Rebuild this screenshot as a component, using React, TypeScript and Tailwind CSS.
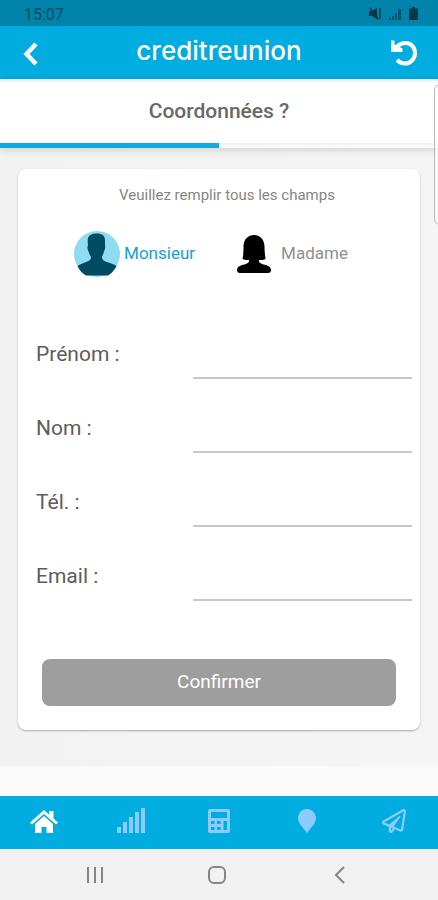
import { useState } from 'react';
import type { ReactNode } from 'react';
import { FaRegPaperPlane } from 'react-icons/fa';

type Gender = 'monsieur' | 'madame';

const fields = [
  { id: 'prenom', label: 'Prénom :', type: 'text' },
  { id: 'nom', label: 'Nom :', type: 'text' },
  { id: 'tel', label: 'Tél. :', type: 'tel' },
  { id: 'email', label: 'Email :', type: 'email' },
];

function StatusBar() {
  return (
    <div className="flex h-[26px] items-center justify-between bg-[#0083ab] pr-5 pl-6 text-[#0a4a60]">
      <span className="pt-1 text-base leading-5">15:07</span>
      <div className="flex items-center gap-2">
        <svg width="12" height="13" viewBox="0 0 12 13" fill="none" stroke="#07394b">
          <path d="M0 4h3l5-3v11l-5-3H0z" fill="#07394b" stroke="none" />
          <path d="M0.500 0.500l9 12" strokeWidth="1.500" />
          <path d="M11 1v11" strokeWidth="1.400" />
        </svg>
        <svg width="12" height="13" viewBox="0 0 12 13" fill="#0a536d">
          <path d="M0 11h2v2H0zM3 9h2v4H3zM6 6h2v7H6zM9 2h3v11H9z" />
        </svg>
        <svg width="9" height="13" viewBox="0 0 9 13" fill="#07394b">
          <path d="M3 0h3v1.500h3V13H0V1.500H3z" />
        </svg>
      </div>
    </div>
  );
}

function Header() {
  return (
    <header className="grid h-[53px] grid-cols-[1fr_auto_1fr] items-center bg-[#00ace0] px-5 text-white">
      <button type="button" aria-label="Retour" className="justify-self-start">
        <svg width="20" height="26" viewBox="0 0 20 26" fill="none" stroke="currentColor" strokeWidth="4.500">
          <path d="M16 4L6.500 14L16 24" />
        </svg>
      </button>
      <span className="pb-1 font-['Inter'] text-[26px] leading-8 font-medium">creditreunion</span>
      <button type="button" aria-label="Recommencer" className="justify-self-end">
        <svg width="28" height="28" viewBox="0 0 28 28" fill="none" stroke="currentColor">
          <path d="M6 8.500C9 5.500 12 4 15.500 4C20.500 4 25 8 25 14C25 20 20.500 24.500 15 24.500C11.500 24.500 9 23 7 21" strokeWidth="4" />
          <path d="M1 1.500H4.500V5.500L12.500 9.500V13H1z" fill="currentColor" stroke="none" />
        </svg>
      </button>
    </header>
  );
}

function MonsieurIcon({ selected }: { selected: boolean }) {
  return (
    <svg width="46" height="46" viewBox="0 0 46 46">
      {selected && <circle cx="23" cy="23" r="23" fill="#8fdcf2" />}
      <path
        d="M22 2.500C27 2 31 4 31 9C31 11 31 12 31 14C31.500 16 31 19 30 20.500C29.500 23 28.500 24 28 26C28 29 30 30 33 31C37 32.500 41 33.500 42.500 35C40.500 39 37 43 34 44.500H12C9 43 5.500 39.500 3.500 35C5 33.500 9 32.500 12 31C15 30 17 29 17 26C16 24 15 22.500 14.500 20.500C13.500 19 13 16 14 14C13.500 11 13.500 9 14 7C15 4 18 2.500 22 2.500z"
        fill={selected ? '#004b60' : '#000'}
      />
    </svg>
  );
}

function MadameIcon({ selected }: { selected: boolean }) {
  return (
    <svg width="34" height="38" viewBox="0 0 34 38">
      <path
        d="M17 0C23 0 27 4 27.500 11C27.500 15 28 20 28.500 24C27 25 24.500 25 22 25C21.500 27 23 28 25 29C29 30 34 31 34 35C34 37 33 38 31 38H3C1 38 0 37 0 35C0 31 5 30 9 29C11 28 12.500 27 12 25C9.500 25 7.500 25 5.500 24C6.500 20 6.500 15 6.500 11C7 4 11 0 17 0z"
        fill={selected ? '#004b60' : '#000'}
      />
    </svg>
  );
}

interface GenderOptionProps {
  value: Gender;
  label: string;
  selected: boolean;
  onSelect: (value: Gender) => void;
  children: ReactNode;
}

function GenderOption({ value, label, selected, onSelect, children }: GenderOptionProps) {
  return (
    <label className="relative flex cursor-pointer items-center">
      <input
        type="radio"
        name="gender"
        value={value}
        checked={selected}
        onChange={() => onSelect(value)}
        className="sr-only"
      />
      <span className="flex h-[46px] w-[46px] items-center justify-center">{children}</span>
      <span className={selected ? 'pl-1 text-[17px] text-[#149fd6]' : 'pl-1 text-[17px] text-[#909090]'}>
        {label}
      </span>
    </label>
  );
}

function CalculatorIcon() {
  return (
    <svg width="22" height="24" viewBox="0 0 22 24" fill="currentColor" fillRule="evenodd">
      <path d="M2 0H20Q22 0 22 2V22Q22 24 20 24H2Q0 24 0 22V2Q0 0 2 0zM3 3V9H19V3zM3 12V15H6.500V12zM9 12V15H12.500V12zM15.500 12V21H19V12zM3 18V21H6.500V18zM9 18V21H12.500V18z" />
    </svg>
  );
}

function TabBar() {
  return (
    <nav className="grid h-[53px] grid-cols-5 items-center bg-[#00ace0] pb-1 text-[#8ccbff]">
      <a href="#accueil" aria-label="Accueil" className="justify-self-center text-white">
        <svg width="28" height="24" viewBox="0 0 28 24" fill="currentColor">
          <path d="M14 1L19 5.500V2H23.500V9.500L28 13.500L26 15.500L14 5L2 15.500L0 13.500z" />
          <path d="M14 7L23 15V24H16.500V18H11.500V24H5V15z" />
        </svg>
      </a>
      <a href="#simulation" aria-label="Simulation" className="justify-self-center">
        <svg width="28" height="25" viewBox="0 0 28 25" fill="currentColor">
          <path d="M0 19h4v6H0zM6 14h4v11H6zM12 9h4v16h-4zM18 4h4v21h-4zM24 0h4v25h-4z" />
        </svg>
      </a>
      <a href="#calcul" aria-label="Calcul" className="justify-self-center">
        <CalculatorIcon />
      </a>
      <a href="#agences" aria-label="Agences" className="justify-self-center">
        <svg width="18" height="24" viewBox="0 0 18 24" fill="currentColor">
          <path d="M9 0C14 0 18 4 18 9C18 14 13.500 18 9 24C4.500 18 0 14 0 9C0 4 4 0 9 0z" />
        </svg>
      </a>
      <a href="#contact" aria-label="Contact" className="justify-self-center">
        <FaRegPaperPlane size={24} />
      </a>
    </nav>
  );
}

function SystemBar() {
  return (
    <div className="grid h-[51px] grid-cols-[1fr_auto_1fr] items-center bg-[#f1f1f1] pr-[90px] pl-[86px] text-[#858585]">
      <button type="button" aria-label="Applications récentes" className="justify-self-start">
        <svg width="18" height="18" viewBox="0 0 18 18" fill="none" stroke="currentColor" strokeWidth="2">
          <path d="M2 1v16M9 1v16M16 1v16" />
        </svg>
      </button>
      <button type="button" aria-label="Écran d'accueil">
        <svg width="18" height="18" viewBox="0 0 18 18" fill="none" stroke="currentColor" strokeWidth="2">
          <rect x="1" y="1" width="16" height="16" rx="5" />
        </svg>
      </button>
      <button type="button" aria-label="Précédent" className="justify-self-end">
        <svg width="18" height="18" viewBox="0 0 18 18" fill="none" stroke="currentColor" strokeWidth="2">
          <path d="M14 1L6 9L14 17" />
        </svg>
      </button>
    </div>
  );
}

export default function App() {
  const [gender, setGender] = useState<Gender>('monsieur');

  return (
    <div className="relative flex min-h-screen flex-col overflow-hidden bg-[#fafafa] font-['Roboto',sans-serif]">
      <StatusBar />
      <Header />

      <div className="relative bg-white shadow-[0_2px_8px_rgba(0,0,0,0.15)]">
        <div className="h-1 bg-linear-to-b from-[#e4e4e4] to-white" />
        <h1 className="pt-3 pb-4 text-center text-[21px] leading-8 font-medium text-[#686868]">
          Coordonnées ?
        </h1>
        <div className="h-[5px] bg-linear-to-b from-[#f0f0f0] to-white">
          <div className="h-[5px] w-1/2 bg-[#12a9dc]" />
        </div>
      </div>

      <main className="bg-linear-to-r from-[#f2f2f2] to-[#f5f5f5] px-[18px] pt-[21px] pb-9">
        <form
          onSubmit={(e) => e.preventDefault()}
          className="rounded-lg bg-white px-2 pt-4 pb-6 shadow-[0_1px_2px_rgba(0,0,0,0.3)]"
        >
          <p className="pl-4 text-center text-[15px] leading-5 text-[#858585]">
            Veuillez remplir tous les champs
          </p>

          <div className="mt-[26px] flex justify-center gap-9 pr-4">
            <GenderOption value="monsieur" label="Monsieur" selected={gender === 'monsieur'} onSelect={setGender}>
              <MonsieurIcon selected={gender === 'monsieur'} />
            </GenderOption>
            <GenderOption value="madame" label="Madame" selected={gender === 'madame'} onSelect={setGender}>
              <MadameIcon selected={gender === 'madame'} />
            </GenderOption>
          </div>

          <div className="mt-7">
            {fields.map((field) => (
              <div key={field.id} className="flex h-[74px] items-end pl-[10px]">
                <label htmlFor={field.id} className="w-[157px] shrink-0 pb-[13px] text-[21px] leading-6 text-[#5c5c5c]">
                  {field.label}
                </label>
                <input
                  id={field.id}
                  type={field.type}
                  className="h-10 min-w-0 flex-1 border-b-2 border-[#c8c8c8] bg-transparent text-lg outline-none"
                />
              </div>
            ))}
          </div>

          <div className="px-4 pt-[58px]">
            <button type="submit" className="h-[47px] w-full rounded-lg bg-[#9e9e9e] text-[19px] text-white">
              Confirmer
            </button>
          </div>
        </form>
      </main>

      <div className="flex-1" />
      <TabBar />
      <SystemBar />

      {/* edge panel handle */}
      <div className="absolute top-[84px] -right-2 h-[141px] w-3 rounded-lg border border-[#b8b8b8] bg-white/40" />
    </div>
  );
}
